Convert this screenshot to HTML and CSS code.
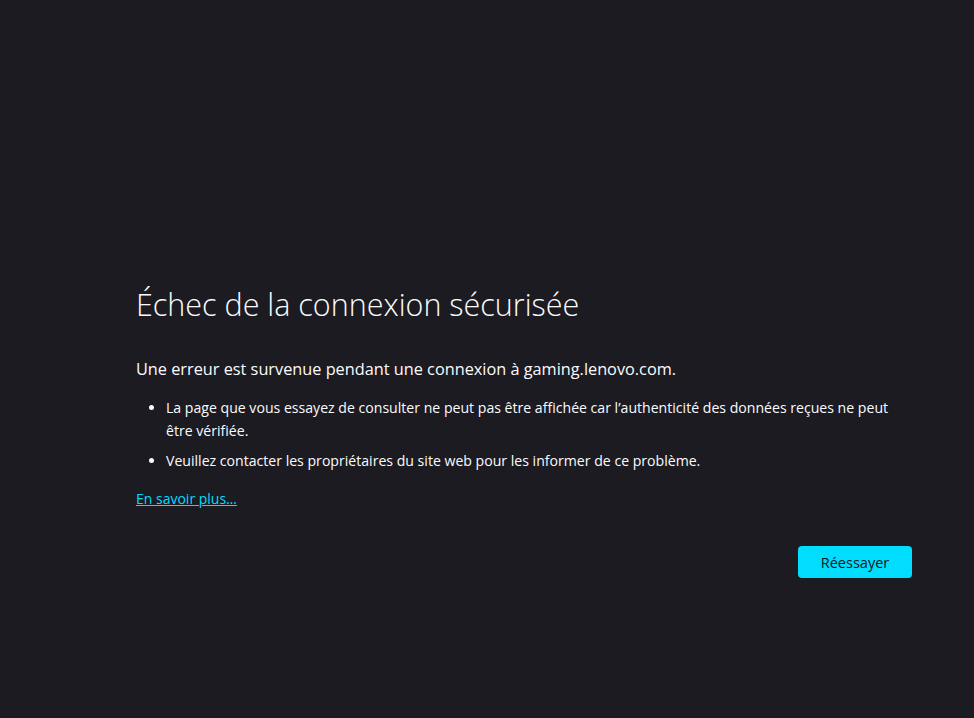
FILE: index.html
```html
<!DOCTYPE html>
<html lang="fr">
<head>
<meta charset="utf-8">
<title>Échec de la connexion sécurisée</title>
<link rel="stylesheet" href="styles.css">
</head>
<body>
<main class="container">
  <h1 class="title">Échec de la connexion sécurisée</h1>
  <p class="intro">Une erreur est survenue pendant une connexion à gaming.lenovo.com.</p>
  <ul class="reasons">
    <li>La page que vous essayez de consulter ne peut pas être affichée car l’authenticité des données reçues ne peut être vérifiée.</li>
    <li>Veuillez contacter les propriétaires du site web pour les informer de ce problème.</li>
  </ul>
  <a class="learn" href="#">En savoir plus…</a>
  <div class="actions">
    <button class="retry">Réessayer</button>
  </div>
</main>
</body>
</html>
```

FILE: styles.css
```css
html, body {
  margin: 0;
  height: 100%;
}
body {
  background: #1c1b22;
  color: #fbfbfe;
  font-family: "Open Sans", "Noto Sans", sans-serif;
  display: flex;
  align-items: flex-start;
}
.container {
  width: 776px;
  margin-left: 136px;
  padding-top: 282px;
}
.title {
  margin: 0;
  font-weight: 300;
  font-size: 30.5px;
  line-height: 44px;
}
.intro {
  margin: 31px 0 0;
  font-size: 16.3px;
  line-height: 24px;
}
.reasons {
  margin: 15px 0 0;
  padding-left: 30px;
  font-size: 14.1px;
  line-height: 23px;
}
.reasons li + li {
  margin-top: 7px;
}
.learn {
  display: inline-block;
  margin-top: 17px;
  color: #00ddff;
  font-size: 14px;
  line-height: 20px;
}
.actions {
  display: flex;
  justify-content: flex-end;
  margin-top: 37px;
}
.retry {
  width: 114px;
  height: 32px;
  border: 0;
  border-radius: 4px;
  background: #00ddff;
  color: #15141a;
  font-family: inherit;
  font-size: 14.5px;
}
```
